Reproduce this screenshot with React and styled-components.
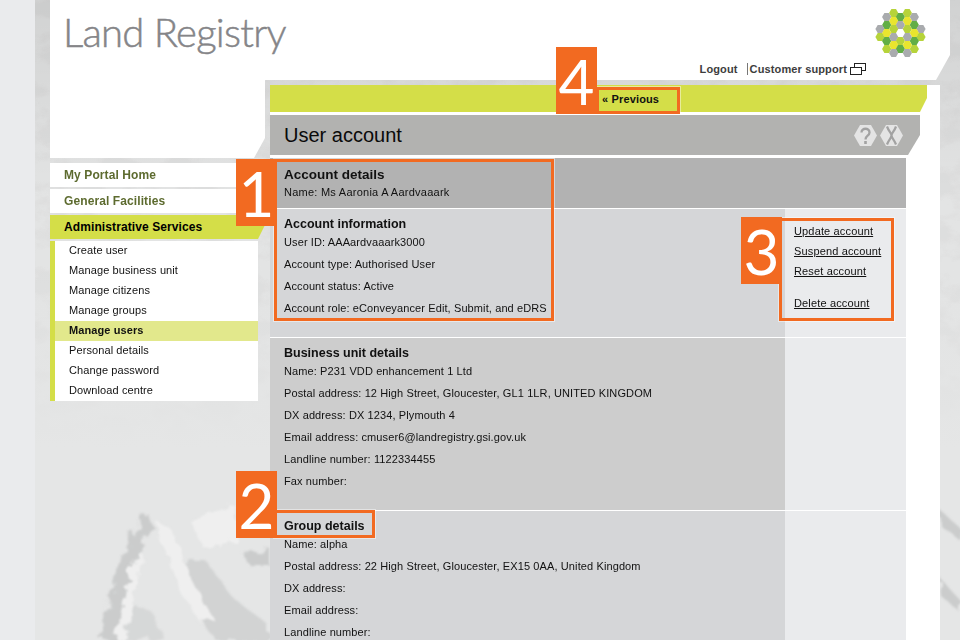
import React from 'react';
import styled, { createGlobalStyle } from 'styled-components';

const GlobalStyle = createGlobalStyle`
  html, body {
    margin: 0;
    height: 640px;
    overflow: hidden;
    background: #eaebed;
    font-family: "Liberation Sans", Arial, sans-serif;
    color: #111;
  }
  * { box-sizing: border-box; }
`;

const Shell = styled.div`
  position: relative;
  margin-left: 35px;
  width: 925px;
  height: 640px;
  padding-left: 15px;
  overflow: hidden;
  background: #e3e4e4;
`;

const Backdrop = styled.svg`
  position: absolute;
  left: 0;
  top: 0;
`;

const Page = styled.div`
  position: relative;
  width: 900px;
`;

const Header = styled.header`
  display: flex;
  justify-content: space-between;
  height: 80px;
  padding: 0 23px 0 13px;
  background: #fff;
  clip-path: polygon(0 0, 100% 0, 100% 55px, 886px 100%, 0 100%);
`;

const Wordmark = styled.div`
  margin-top: 7px;
  font-family: Lato, "Liberation Sans", sans-serif;
  font-weight: 300;
  font-size: 40px;
  line-height: 50px;
  letter-spacing: -0.75px;
  color: #858588;
  -webkit-text-stroke: 0.5px #858588;
`;

const HeaderRight = styled.div`
  display: flex;
  flex-direction: column;
  align-items: flex-end;
  padding-top: 9px;
`;

const TopLinks = styled.nav`
  display: flex;
  align-items: center;
  margin: 4px 61px 0 0;
  font-size: 11px;
  font-weight: bold;
  color: #3d3d3d;
`;

const TopLink = styled.span`
  white-space: nowrap;
  letter-spacing: 0.13px;
`;

const TopDivider = styled.span`
  width: 1px;
  height: 12px;
  margin: 0 2px 0 9px;
  background: #777;
`;

const Columns = styled.div`
  display: flex;
  align-items: flex-start;
`;

const Sidebar = styled.aside`
  width: 215px;
`;

const SideBlank = styled.div`
  height: 78px;
  margin-bottom: 5px;
  background: #fff;
  clip-path: polygon(0 0, 100% 0, 100% 58px, 204px 100%, 0 100%);
`;

const NavRow = styled.div`
  display: flex;
  align-items: center;
  width: 208px;
  height: 24px;
  margin-bottom: 2px;
  padding-left: 14px;
  background: #fff;
  font-size: 12px;
  font-weight: bold;
  letter-spacing: 0.1px;
  color: #5d6b2f;
`;

const NavActive = styled(NavRow)`
  width: 215px;
  background: #d4de48;
  color: #000;
  clip-path: polygon(0 0, 100% 0, 100% 10px, 208px 100%, 0 100%);
`;

const SubNav = styled.ul`
  width: 208px;
  margin: 0;
  padding: 0;
  list-style: none;
  background: #fff;
  border-left: 5px solid #d4de48;
`;

const SubItem = styled.li`
  height: 20px;
  padding-left: 14px;
  line-height: 19px;
  font-size: 11px;
  letter-spacing: 0.1px;
  font-weight: ${p => (p.$current ? 'bold' : 'normal')};
  background: ${p => (p.$current ? '#e2e88c' : 'transparent')};
`;

const Main = styled.main`
  width: 675px;
  padding: 5px 0 0 5px;
`;

const Panel = styled.div`
  background: #fff;
  min-height: 600px;
`;

const PagerBand = styled.div`
  display: flex;
  align-items: center;
  width: 657px;
  height: 27px;
  margin-bottom: 3px;
  padding-left: 332px;
  background: #d4de48;
  font-size: 11px;
  font-weight: bold;
  letter-spacing: 0.15px;
  clip-path: polygon(0 0, 100% 0, 100% 13px, 650px 100%, 0 100%);
`;

const TitleBar = styled.div`
  display: flex;
  align-items: center;
  justify-content: space-between;
  width: 650px;
  height: 40px;
  margin-bottom: 3px;
  padding: 0 17px 0 14px;
  background: #b2b2b0;
  clip-path: polygon(0 0, 100% 0, 100% 20px, 638px 100%, 0 100%);
`;

const Title = styled.h1`
  margin: 0;
  font-size: 20px;
  font-weight: normal;
  color: #0a0a0a;
`;

const TitleIcons = styled.div`
  display: flex;
  gap: 3px;
`;

const Sheet = styled.div`
  width: 636px;
`;

const Section = styled.section`
  display: flex;
  margin-bottom: 1px;
`;

const SectionBody = styled.div`
  flex: ${p => (p.$wide ? '1' : '0 0 515px')};
  padding: ${p => (p.$wide ? '8px 14px 5px' : '7px 14px 18px')};
  background: ${p => p.$bg};
`;

const SectionAside = styled.div`
  flex: 1;
  padding: 12px 0 0 9px;
  background: ${p => p.$bg || '#eaebed'};
`;

const Heading = styled.h2`
  margin: 0;
  height: 15px;
  line-height: 17px;
  font-size: ${p => (p.$large ? '13.5px' : '12.5px')};
  font-weight: bold;
  color: #111;
`;

const Line = styled.p`
  margin: 0;
  height: 22px;
  line-height: 22px;
  font-size: 11px;
  letter-spacing: 0.11px;
  white-space: nowrap;
`;

const NameLine = styled(Line)`
  letter-spacing: 0.25px;
`;

const Action = styled.a`
  display: block;
  height: 20px;
  margin-bottom: ${p => (p.$gap ? '12px' : '0')};
  line-height: 20px;
  font-size: 11px;
  letter-spacing: 0.15px;
  color: #111;
  text-decoration: underline;
`;

const CalloutBox = styled.div`
  position: absolute;
  left: ${p => p.$x}px;
  top: ${p => p.$y}px;
  width: ${p => p.$w}px;
  height: ${p => p.$h}px;
  border: 3px solid #f26a21;
  outline: 1px solid rgba(255, 255, 255, 0.45);
  pointer-events: none;
`;

const Badge = styled.div`
  position: absolute;
  left: ${p => p.$x}px;
  top: ${p => p.$y}px;
  display: flex;
  align-items: center;
  justify-content: center;
  width: 41px;
  height: 67px;
  background: #f26a21;
  color: #fff;
  font-family: Lato, "Open Sans", sans-serif;
  font-weight: 400;
  font-size: 62px;
  line-height: 1;
`;

// hexagon cluster, coords taken from the 3x crop of the logo
const HEXES = [
  [131, 38, 'l'], [172, 38, 'l'],
  [110, 50, 'g'], [151, 50, 'd'], [193, 50, 'g'],
  [131, 62, 'y'], [172, 62, 'y'],
  [110, 74, 'd'], [151, 74, 'g'], [193, 74, 'd'],
  [90, 86, 'g'], [131, 86, 'l'], [172, 86, 'l'], [213, 86, 'g'],
  [110, 98, 'y'], [193, 98, 'y'],
  [90, 110, 'l'], [131, 110, 'g'], [172, 110, 'g'], [213, 110, 'l'],
  [110, 122, 'd'], [151, 122, 'l'], [193, 122, 'd'],
  [131, 134, 'y'], [172, 134, 'y'],
  [110, 146, 'l'], [151, 146, 'd'], [193, 146, 'l'],
  [131, 158, 'g'], [172, 158, 'g'],
];
const HEX_FILL = { l: '#b6d33a', g: '#a9abae', d: '#62ae45', y: '#e9e52e' };

function hexPoints(cx, cy, r) {
  const h = r * 0.866;
  return [
    [cx - r, cy], [cx - r / 2, cy - h], [cx + r / 2, cy - h],
    [cx + r, cy], [cx + r / 2, cy + h], [cx - r / 2, cy + h],
  ].map(p => p.join(',')).join(' ');
}

const HexLogo = () => (
  <svg width="52" height="50" viewBox="0 0 52 50">
    {HEXES.map(([x, y, c]) => (
      <polygon key={`${x}-${y}`} points={hexPoints(x / 3 - 25, y / 3 - 8.7, 4.6)} fill={HEX_FILL[c]} />
    ))}
  </svg>
);

const NewWindowIcon = () => (
  <svg width="16" height="12" viewBox="0 0 16 12" style={{ marginLeft: 3 }}>
    <rect x="4.5" y="0.5" width="11" height="7" fill="#fff" stroke="#222" />
    <rect x="0.5" y="4.5" width="11" height="7" fill="#fff" stroke="#222" />
  </svg>
);

const HelpIcon = () => (
  <svg width="23" height="21" viewBox="0 0 23 21">
    <polygon points="0,10.5 6,0 17,0 23,10.5 17,21 6,21" fill="#e4e4e4" />
    <path d="M7.5 7.5 C7.5 2.5 15.5 2.5 15.5 7.5 C15.5 11 11.5 10.5 11.5 14.5" fill="none" stroke="#a2a2a2" strokeWidth="2.3" />
    <rect x="10.2" y="16" width="2.6" height="3" fill="#a2a2a2" />
  </svg>
);

const CloseIcon = () => (
  <svg width="23" height="21" viewBox="0 0 23 21">
    <polygon points="0,10.5 6,0 17,0 23,10.5 17,21 6,21" fill="#e4e4e4" />
    <path d="M7 1.5 C9 7 11.5 8 11.5 10.5 C11.5 13 9 14 7 19.5 M16 1.5 C14 7 11.5 8 11.5 10.5 C11.5 13 14 14 16 19.5" fill="none" stroke="#a2a2a2" strokeWidth="2.2" />
  </svg>
);

// marble-ish page texture behind everything, in page coordinates
const Texture = () => (
  <Backdrop width="925" height="640" viewBox="35 0 925 640">
    <defs>
      <filter id="grain" x="0" y="0" width="100%" height="100%">
        <feTurbulence type="fractalNoise" baseFrequency="0.03 0.05" numOctaves="5" seed="8" />
        <feColorMatrix values="0 0 0 0 0.72  0 0 0 0 0.72  0 0 0 0 0.72  3 3 0 0 -2.7" />
      </filter>
      <filter id="rock" x="-10%" y="-10%" width="120%" height="120%">
        <feTurbulence type="fractalNoise" baseFrequency="0.09" numOctaves="4" seed="3" />
        <feDisplacementMap in="SourceGraphic" scale="14" />
        <feGaussianBlur stdDeviation="1" />
      </filter>
      <linearGradient id="topFade" x1="0" y1="0" x2="0" y2="1">
        <stop offset="0" stopColor="#000" stopOpacity="0.08" />
        <stop offset="1" stopColor="#000" stopOpacity="0" />
      </linearGradient>
      <linearGradient id="topFill" x1="0" y1="0" x2="0" y2="1">
        <stop offset="0" stopColor="#e3e4e4" stopOpacity="0" />
        <stop offset="0.4" stopColor="#e3e4e4" stopOpacity="0" />
        <stop offset="0.7" stopColor="#e5e6e6" stopOpacity="1" />
      </linearGradient>
    </defs>
    <rect x="35" y="0" width="925" height="640" fill="#e3e4e4" />
    <rect x="35" y="0" width="925" height="640" filter="url(#grain)" opacity="0.85" />
    <rect x="35" y="0" width="925" height="640" fill="url(#topFill)" />
    <rect x="35" y="0" width="925" height="200" fill="url(#topFade)" />
    <g fill="#cbcccc" filter="url(#rock)">
      <path d="M146 512 L132 535 L116 570 L110 600 L100 640 L124 640 L126 600 L135 560 L152 525 Z" />
      <path d="M178 565 L205 560 L235 600 L268 625 L268 640 L215 640 L195 610 Z" opacity="0.75" />
      <path d="M243 555 L270 548 L270 565 L250 565 Z" />
      <path d="M120 600 L150 610 L165 640 L125 640 Z" opacity="0.55" />
      <path d="M940 510 L960 528 L960 540 L940 525 Z" />
      <path d="M940 578 L960 600 L960 612 L940 595 Z" />
    </g>
    <g fill="#efefef" filter="url(#rock)">
      <path d="M155 520 L172 530 L190 575 L212 618 L200 622 L180 590 L165 550 Z" />
      <path d="M135 555 L143 552 L125 640 L114 640 Z" />
      <path d="M190 520 L236 505 L236 540 L205 550 Z" />
    </g>
  </Backdrop>
);

const LINES = {
  account: ['User ID: AAAardvaaark3000', 'Account type: Authorised User', 'Account status: Active', 'Account role: eConveyancer Edit, Submit, and eDRS'],
  business: ['Name: P231 VDD enhancement 1 Ltd', 'Postal address: 12 High Street, Gloucester, GL1 1LR, UNITED KINGDOM', 'DX address: DX 1234, Plymouth 4', 'Email address: cmuser6@landregistry.gsi.gov.uk', 'Landline number: 1122334455', 'Fax number:'],
  group: ['Name: alpha', 'Postal address: 22 High Street, Gloucester, EX15 0AA, United Kingdom', 'DX address:', 'Email address:', 'Landline number:'],
};

const SUB_ITEMS = ['Create user', 'Manage business unit', 'Manage citizens', 'Manage groups', 'Manage users', 'Personal details', 'Change password', 'Download centre'];

export default function App() {
  return (
    <>
      <GlobalStyle />
      <Shell>
        <Texture />
        <Page>
          <Header>
            <Wordmark>Land Registry</Wordmark>
            <HeaderRight>
              <HexLogo />
              <TopLinks>
                <TopLink>Logout</TopLink>
                <TopDivider />
                <TopLink>Customer support</TopLink>
                <NewWindowIcon />
              </TopLinks>
            </HeaderRight>
          </Header>
          <Columns>
            <Sidebar>
              <SideBlank />
              <NavRow>My Portal Home</NavRow>
              <NavRow>General Facilities</NavRow>
              <NavActive>Administrative Services</NavActive>
              <SubNav>
                {SUB_ITEMS.map(item => (
                  <SubItem key={item} $current={item === 'Manage users'}>{item}</SubItem>
                ))}
              </SubNav>
            </Sidebar>
            <Main>
              <Panel>
                <PagerBand>« Previous</PagerBand>
                <TitleBar>
                  <Title>User account</Title>
                  <TitleIcons><HelpIcon /><CloseIcon /></TitleIcons>
                </TitleBar>
                <Sheet>
                  <Section>
                    <SectionBody $wide $bg="#b2b2b2">
                      <Heading $large>Account details</Heading>
                      <NameLine>Name: Ms Aaronia A Aardvaaark</NameLine>
                    </SectionBody>
                  </Section>
                  <Section>
                    <SectionBody $bg="#d5d6d8">
                      <Heading>Account information</Heading>
                      {LINES.account.map(l => <Line key={l}>{l}</Line>)}
                    </SectionBody>
                    <SectionAside>
                      <Action>Update account</Action>
                      <Action>Suspend account</Action>
                      <Action $gap>Reset account</Action>
                      <Action>Delete account</Action>
                    </SectionAside>
                  </Section>
                  <Section>
                    <SectionBody $bg="#cdcdcd">
                      <Heading>Business unit details</Heading>
                      {LINES.business.map(l => <Line key={l}>{l}</Line>)}
                    </SectionBody>
                    <SectionAside />
                  </Section>
                  <Section>
                    <SectionBody $bg="#d5d6d8">
                      <Heading>Group details</Heading>
                      {LINES.group.map(l => <Line key={l}>{l}</Line>)}
                    </SectionBody>
                    <SectionAside />
                  </Section>
                </Sheet>
              </Panel>
            </Main>
          </Columns>
          <CalloutBox $x={224} $y={159} $w={280} $h={162} />
          <Badge $x={186} $y={159}>1</Badge>
          <CalloutBox $x={224} $y={510} $w={101} $h={28} />
          <Badge $x={186} $y={471}>2</Badge>
          <CalloutBox $x={729} $y={218} $w={115} $h={103} />
          <Badge $x={691} $y={217}>3</Badge>
          <CalloutBox $x={546} $y={87} $w={84} $h={27} />
          <Badge $x={506} $y={47}>4</Badge>
        </Page>
      </Shell>
    </>
  );
}
